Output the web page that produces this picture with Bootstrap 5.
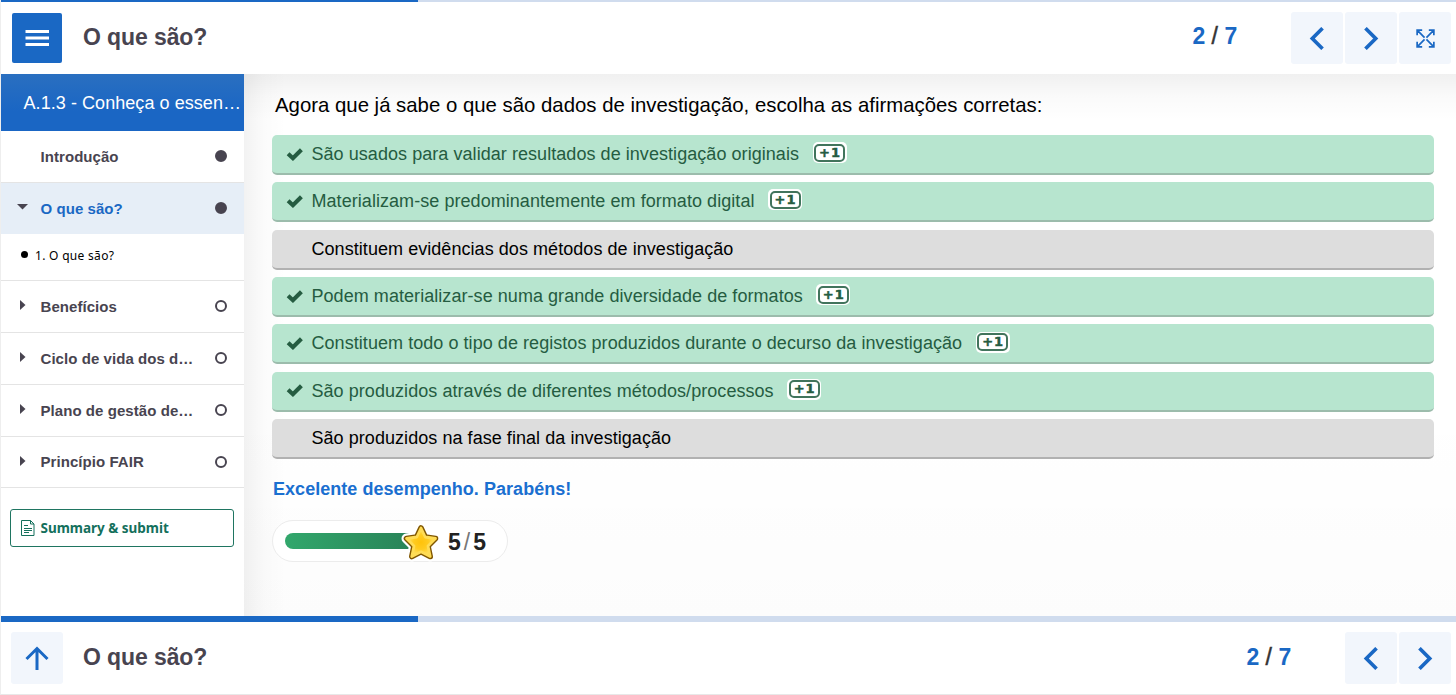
<!DOCTYPE html>
<html lang="pt">
<head>
<meta charset="utf-8">
<meta name="viewport" content="width=device-width, initial-scale=1">
<title>O que são?</title>
<link href="https://cdn.jsdelivr.net/npm/bootstrap@5.3.0/dist/css/bootstrap.min.css" rel="stylesheet">
<style>
:root{--brand:#1a68c4;--ink:#484450;--deep:#255c41}
body{font-family:"Liberation Sans",Arial,sans-serif;color:#000;height:695px;overflow:hidden;line-height:1.2}
.book{height:695px;border-left:1px solid #eee;border-bottom:1px solid #e8e8e8}
.track{height:2px;background:#d0dcee;border-radius:0}
.track-lg{height:6px}
.track .progress-bar{background:var(--brand)}
.bar{height:72px}
.page-title{font-size:23px;letter-spacing:-.1px;font-weight:700;color:var(--ink)}
.menu-btn{width:50px;height:50px;background:var(--brand);border-radius:2px;margin-left:11px}
.nav-btn{width:52px;height:52px;background:#f2f6fc;border-radius:3px;color:var(--brand)}
.pager{font-size:23px;font-weight:700;color:var(--brand);white-space:pre;width:46px;margin-top:-2px}
footer .pager{margin-top:0}
.pager i{font-style:normal;font-weight:400;color:#333;-webkit-text-stroke:.5px #333}
.side{width:243px;background:#fff}
.side-title{height:57px;font-size:18px;letter-spacing:.06px;color:#fff;padding:2px 2px 0 22.5px;background:linear-gradient(#2a6fc0,#1a66c4 65%)}
.chapter{height:52px;border-bottom:1px solid #e4e4e4;font-size:15px;letter-spacing:.06px;font-weight:700;color:var(--ink)}
.chapter.current{background:#e6eef7;color:var(--brand);border-color:#e6eef7;height:51px;padding-top:1px}
.chapter.last{height:51px}
.arrow-slot{width:39.5px;padding-left:18px;height:20px}
.chapter .label{width:155px}
.dot{width:12px;height:12px;border-radius:50%;border:2px solid var(--ink);margin:-1px 0 0 19px}
.dot.full{background:var(--ink)}
.section-row{height:47px;border-bottom:1px solid #e4e4e4;font:12px "Noto Sans",sans-serif;letter-spacing:.3px;padding:0 0 4px 20px}
.bullet{width:7px;height:7px;border-radius:50%;background:#000;margin:-2px 7px 0 0}
.submit{margin:21px 10px 0 9px;height:38px;border:1px solid #1f7561;border-radius:3px;color:#14705c;font:700 13.500px "Noto Sans",sans-serif;padding:0 0 1px 10px}
.submit-label{letter-spacing:-.02px;margin-left:1.500px}
.stage{padding:19px 22px 0 28px;background:linear-gradient(90deg,rgba(0,0,0,.05),rgba(0,0,0,.015) 20px,transparent 42px),linear-gradient(rgba(0,0,0,.06),rgba(0,0,0,.02) 22px,transparent 46px),linear-gradient(transparent 60%,rgba(0,0,0,.01)),#fff}
.question{font-size:20.380px;line-height:24px;margin:0 0 18px 3px}
.options{gap:7.35px}
.option{height:40px;border-radius:5px;background:#ddd;border-bottom:2px solid #b1b1b1;font-size:18px;letter-spacing:.054px;padding:1.300px 0 0 14px}
.option.right{background:#b7e5cf;border-color:#9cbcac;color:var(--deep)}
.tick{width:25.5px}
svg.tick{margin-top:-2px}
.plus{margin:-4px 0 0 13.500px;padding:1.5px;background:#fff;border-radius:5px}
.plus span{display:block;width:31px;height:18px;border:2px solid #41745c;border-radius:5px;text-align:center;font:700 13px/14px "DejaVu Sans",sans-serif;-webkit-text-stroke:.5px var(--deep);letter-spacing:1px;padding-left:1px}
.feedback{font-size:18px;letter-spacing:.04px;font-weight:700;color:#1a6fd0;line-height:22px;margin:19px 0 0 1px}
.score{width:236px;height:42px;border:1px solid #ececec;border-radius:21px;background:#fff;margin-top:20px;padding-left:12px}
.meter{width:127px;height:16px;border-radius:8px 0 0 8px;background:linear-gradient(90deg,#32a76c,#298358)}
.star{margin:1px 0 0 -12px}
.points{font-size:23px;font-weight:700;color:#222;margin:3px 0 0 6px}
.points i{font-style:normal;font-weight:400;color:#777;margin:0 3px}
</style>
</head>
<body>
<svg class="d-none">
<symbol id="left" viewBox="0 0 14 22"><path d="M12.3 1.2 2.5 11l9.800 9.800" fill="none" stroke="currentColor" stroke-width="3.500"/></symbol>
<symbol id="right" viewBox="0 0 14 22"><path d="M1.700 1.200 11.500 11 1.700 20.800" fill="none" stroke="currentColor" stroke-width="3.500"/></symbol>
<symbol id="check" viewBox="0 0 18 14"><path d="M2.100 6.800 6.900 11.200 15.400 2.700" fill="none" stroke="currentColor" stroke-width="4.100"/></symbol>
<symbol id="closed" viewBox="0 0 8 10"><path d="M1 0 6.500 5 1 10Z" fill="#484450"/></symbol>
</svg>
<div class="book d-flex flex-column">
  <div class="progress track"><div class="progress-bar" style="width:28.66%"></div></div>
  <header class="bar d-flex align-items-center">
    <button class="btn menu-btn p-0 border-0 d-flex align-items-center justify-content-center"><svg width="24" height="16" class="ms-1 me-1"><path d="M.5 1.500h23.500M.5 8h23.500M.5 14.500h23.500" stroke="#fff" stroke-width="3.200"/></svg></button>
    <div class="page-title ms-3" style="padding-left:5px">O que são?</div>
    <div class="pager ms-auto">2<i> / </i>7</div>
    <div class="d-flex" style="gap:2px;margin:0 4.600px 0 53px">
      <button class="btn nav-btn p-0 border-0"><svg width="16" height="23"><use href="#left"/></svg></button>
      <button class="btn nav-btn p-0 border-0"><svg width="16" height="23"><use href="#right"/></svg></button>
      <button class="btn nav-btn p-0 border-0"><svg width="19" height="19" viewBox="0 0 20 20" fill="none" stroke="currentColor" stroke-width="1.800"><path d="M1.200 6.500V1.200H6.500M13.500 1.200h5.300V6.500M18.800 13.500v5.300H13.500M6.500 18.800H1.200V13.500M1.500 1.500l7.500 7.500M18.500 1.500l-7.500 7.500M18.500 18.500l-7.500-7.500M1.500 18.500l7.500-7.500"/></svg></button>
    </div>
  </header>
  <main class="d-flex flex-grow-1">
    <nav class="side flex-shrink-0">
      <div class="side-title d-flex align-items-center"><span class="text-nowrap">A.1.3 - Conheça o essen…</span></div>
      <div class="chapter d-flex align-items-center"><span class="arrow-slot"></span><span class="label">Introdução</span><span class="dot full"></span></div>
      <div class="chapter current d-flex align-items-center"><span class="arrow-slot d-flex" style="padding-left:16px"><svg width="12" height="8" class="mt-1"><path d="M0 1h11L5.500 6.500Z" fill="#484450"/></svg></span><span class="label">O que são?</span><span class="dot full"></span></div>
      <div class="section-row d-flex align-items-center"><span class="bullet"></span>1. O que são?</div>
      <div class="chapter d-flex align-items-center"><span class="arrow-slot d-flex"><svg width="8" height="10" style="margin-top:3px"><use href="#closed"/></svg></span><span class="label">Benefícios</span><span class="dot"></span></div>
      <div class="chapter d-flex align-items-center"><span class="arrow-slot d-flex"><svg width="8" height="10" style="margin-top:3px"><use href="#closed"/></svg></span><span class="label text-nowrap">Ciclo de vida dos d…</span><span class="dot"></span></div>
      <div class="chapter d-flex align-items-center"><span class="arrow-slot d-flex"><svg width="8" height="10" style="margin-top:3px"><use href="#closed"/></svg></span><span class="label text-nowrap">Plano de gestão de…</span><span class="dot"></span></div>
      <div class="chapter last d-flex align-items-center"><span class="arrow-slot d-flex"><svg width="8" height="10" style="margin-top:4px"><use href="#closed"/></svg></span><span class="label">Princípio FAIR</span><span class="dot"></span></div>
      <div class="submit d-flex align-items-center"><svg width="14" height="16" class="me-1" fill="none" stroke="currentColor" stroke-width="1"><path d="M9.500.5H.5v15h12.500V4M9.500.5v3.500h3.500zM3 5.500h4M3 8.500h8M3 10.500h8M3 12.500h5"/></svg><span class="submit-label">Summary &amp; submit</span></div>
    </nav>
    <section class="stage flex-grow-1">
      <p class="question">Agora que já sabe o que são dados de investigação, escolha as afirmações corretas:</p>
      <div class="options d-flex flex-column">
        <div class="option right d-flex align-items-center"><svg class="tick" width="18" height="14" viewBox="0 0 25.500 14"><use href="#check" width="18" height="14"/></svg><span>São usados para validar resultados de investigação originais</span><div class="plus"><span>+1</span></div></div>
        <div class="option right d-flex align-items-center"><svg class="tick" width="18" height="14" viewBox="0 0 25.500 14"><use href="#check" width="18" height="14"/></svg><span>Materializam-se predominantemente em formato digital</span><div class="plus"><span>+1</span></div></div>
        <div class="option d-flex align-items-center"><span class="tick"></span><span>Constituem evidências dos métodos de investigação</span></div>
        <div class="option right d-flex align-items-center"><svg class="tick" width="18" height="14" viewBox="0 0 25.500 14"><use href="#check" width="18" height="14"/></svg><span>Podem materializar-se numa grande diversidade de formatos</span><div class="plus"><span>+1</span></div></div>
        <div class="option right d-flex align-items-center"><svg class="tick" width="18" height="14" viewBox="0 0 25.500 14"><use href="#check" width="18" height="14"/></svg><span>Constituem todo o tipo de registos produzidos durante o decurso da investigação</span><div class="plus"><span>+1</span></div></div>
        <div class="option right d-flex align-items-center"><svg class="tick" width="18" height="14" viewBox="0 0 25.500 14"><use href="#check" width="18" height="14"/></svg><span>São produzidos através de diferentes métodos/processos</span><div class="plus"><span>+1</span></div></div>
        <div class="option d-flex align-items-center"><span class="tick"></span><span>São produzidos na fase final da investigação</span></div>
      </div>
      <div class="feedback">Excelente desempenho. Parabéns!</div>
      <div class="score d-flex align-items-center">
        <div class="meter"></div>
        <svg class="star" width="42" height="40" viewBox="0 0 42 40">
          <defs><radialGradient id="gold"><stop offset="0" stop-color="#ffc20a"/><stop offset=".5" stop-color="#ffcb20"/><stop offset="1" stop-color="#ffe36a"/></radialGradient></defs>
          <g stroke-linejoin="round"><path d="M21 6 25.200 15 35.500 16.500 28 24 30.200 34.500 21 29.800 11.800 34.500 14 24 6.500 16.500 16.800 15Z" fill="#fff" stroke="#fff" stroke-width="10"/><path d="M21 6 25.200 15 35.500 16.500 28 24 30.200 34.500 21 29.800 11.800 34.500 14 24 6.500 16.500 16.800 15Z" fill="#805600" stroke="#805600" stroke-width="5.600"/><path d="M21 6 25.200 15 35.500 16.500 28 24 30.200 34.500 21 29.800 11.800 34.500 14 24 6.500 16.500 16.800 15Z" fill="url(#gold)" stroke="#ffdc55" stroke-width="2.800"/></g></svg>
        <div class="points">5<i>/</i>5</div>
      </div>
    </section>
  </main>
  <div class="progress track track-lg"><div class="progress-bar" style="width:28.66%"></div></div>
  <footer class="bar d-flex align-items-center">
    <button class="btn nav-btn p-0 border-0" style="margin-left:10px"><svg width="24" height="25" fill="none" stroke="currentColor" stroke-width="3"><path d="M12 24V2.500M1.500 13 12 2.500 22.500 13"/></svg></button>
    <div class="page-title ms-3 ps-1">O que são?</div>
    <div class="pager ms-auto">2<i> / </i>7</div>
    <div class="d-flex" style="gap:2px;margin:0 4.600px 0 53px">
      <button class="btn nav-btn p-0 border-0"><svg width="16" height="23"><use href="#left"/></svg></button>
      <button class="btn nav-btn p-0 border-0"><svg width="16" height="23"><use href="#right"/></svg></button>
    </div>
  </footer>
</div>
<script src="https://cdn.jsdelivr.net/npm/bootstrap@5.3.0/dist/js/bootstrap.bundle.min.js"></script>
</body>
</html>
